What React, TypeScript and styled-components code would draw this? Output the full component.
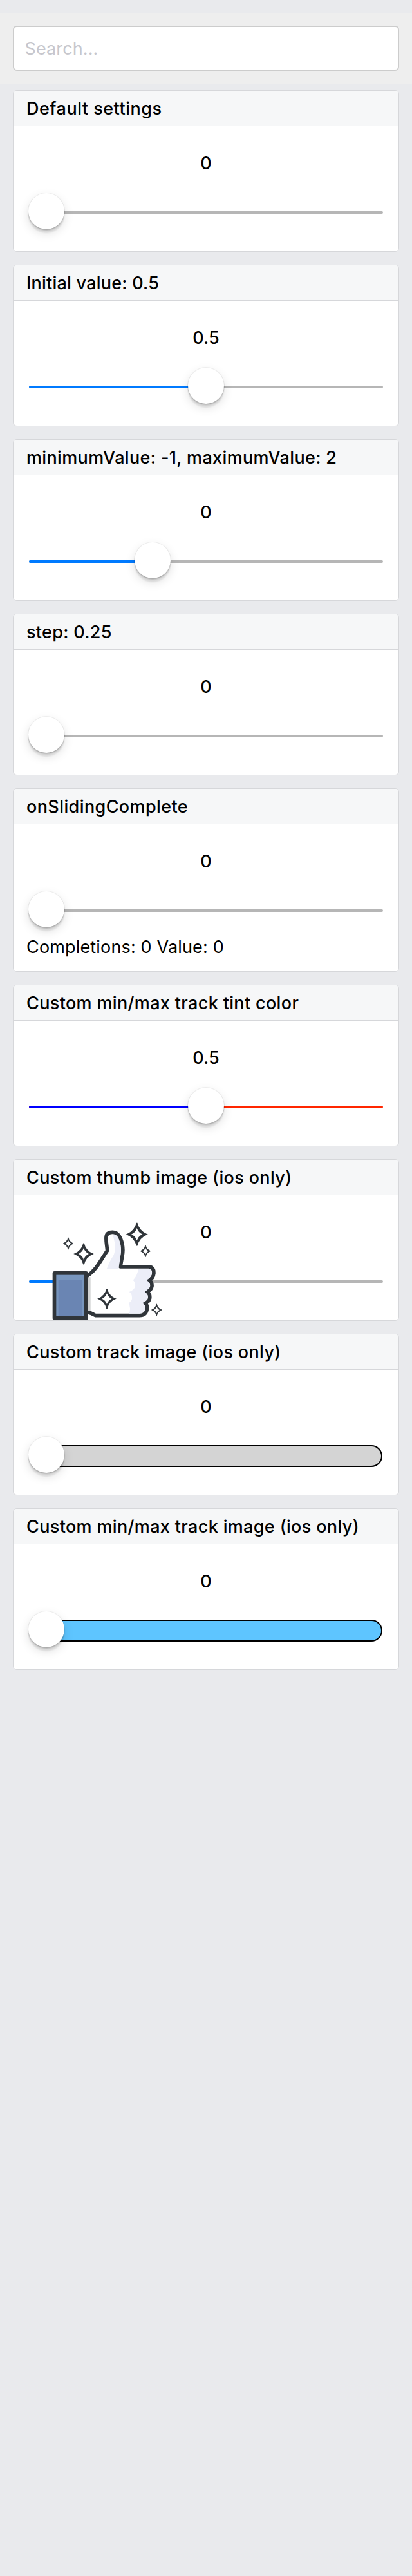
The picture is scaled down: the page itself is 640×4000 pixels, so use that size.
import React from 'react';
import styled, { createGlobalStyle } from 'styled-components';

const Global = createGlobalStyle`
  *, *::before, *::after { box-sizing: border-box; }
  body {
    margin: 0;
    background: #e9eaed;
    color: #000;
    font-family: Inter, "Liberation Sans", sans-serif;
  }
`;

const Page = styled.main`
  min-height: 4000px;
  padding-top: 20px;
  background: #e9eaed;
`;

const SearchBar = styled.div`
  height: 110px;
  padding: 20px;
  background: #eeeeee;
`;

const SearchInput = styled.input`
  display: block;
  width: 100%;
  height: 70px;
  padding: 1px 16.5px 0;
  border: 2px solid #cccccc;
  border-radius: 6px;
  outline: none;
  background: #fff;
  font: 400 27px/32px Inter, "Liberation Sans", sans-serif;
  letter-spacing: 0.11px;

  &::placeholder {
    color: #c7c7cd;
    opacity: 1;
  }
`;

const List = styled.div`
  display: flex;
  flex-direction: column;
  gap: 20px;
  padding: 10px 20px;
`;

const Card = styled.section`
  overflow: hidden;
  border: 1px solid #d6d7da;
  border-radius: 6px;
  background: #fff;
`;

const CardTitle = styled.h2<{ $tracking: number }>`
  height: 55px;
  margin: 0;
  padding: 11px 20px 0;
  border-bottom: 1px solid #d6d7da;
  background: #f6f7f8;
  font-size: 27px;
  font-weight: 500;
  letter-spacing: ${p => p.$tracking}px;
  line-height: 34px;
  white-space: nowrap;
`;

const CardBody = styled.div<{ $tall: boolean }>`
  height: ${p => (p.$tall ? 228 : 194)}px;
  padding: 41px 21px 0;
`;

const Value = styled.div`
  height: 34px;
  font-size: 27px;
  font-weight: 500;
  line-height: 34px;
  text-align: center;
`;

const SliderBox = styled.div`
  position: relative;
  display: flex;
  align-items: center;
  height: 80px;
  margin-top: 19px;
  padding: 0 3px;
`;

const Track = styled.div<{ $color: string }>`
  width: 100%;
  height: 4px;
  overflow: hidden;
  border-radius: 2px;
  background: ${p => p.$color};
`;

const Fill = styled.div<{ $color: string; $ratio: number }>`
  width: ${p => p.$ratio * 100}%;
  height: 100%;
  background: ${p => p.$color};
`;

const ImageTrack = styled.div<{ $color: string }>`
  width: 100%;
  height: 34px;
  margin-right: 1px;
  border: 2px solid #000;
  border-radius: 17px;
  background: ${p => p.$color};
`;

const Thumb = styled.div<{ $ratio: number }>`
  position: absolute;
  top: 10px;
  left: ${p => 2 + p.$ratio * 496}px;
  width: 56px;
  height: 56px;
  border-radius: 50%;
  background: #fff;
  box-shadow:
    0 0 0 1px rgba(0, 0, 0, 0.05),
    0 2px 2px rgba(0, 0, 0, 0.16),
    0 6px 2px rgba(0, 0, 0, 0.08),
    0 6px 16px rgba(0, 0, 0, 0.13);
`;

const LikeThumb = styled.svg`
  position: absolute;
  top: -80px;
  left: -2px;
  width: 240px;
  height: 200px;
`;

const Note = styled.div`
  height: 34px;
  margin-left: -1px;
  font-size: 27px;
  letter-spacing: 0.16px;
  line-height: 34px;
`;

const INK = '#30353a';

const sparkles = [
  { x: 198, y: 183, s: 0.52 },
  { x: 270, y: 231, s: 0.92 },
  { x: 518, y: 140, s: 1 },
  { x: 558, y: 218, s: 0.52 },
  { x: 378, y: 440, s: 0.87 },
  { x: 610, y: 492, s: 0.52 },
];

function Like() {
  return (
    <LikeThumb viewBox="0 0 720 600" aria-hidden>
      <path
        d="M286 334 C330 306 348 262 380 216 C378 190 373 172 375 152 Q377 130 405 130 Q430 130 442 160 Q458 200 450 240 L441 291 L575 291 Q597 293 597 320 Q595 346 572 354 Q590 360 588 382 Q586 400 564 408 Q580 415 578 437 Q575 455 554 460 Q570 470 565 490 Q560 518 530 518 L325 518 Q304 505 286 502 Z"
        fill="#fff"
        stroke={INK}
        strokeWidth="17"
        strokeLinejoin="round"
      />
      <path
        d="M404 139 Q430 142 438 175 Q448 205 441 240 L433 300 L378 300 Q390 265 408 240 Q426 205 404 139 Z"
        fill="#eceef8"
      />
      <path
        d="M525 300 L575 300 Q588 304 588 320 Q586 340 562 354 Q580 362 579 380 Q576 394 554 408 Q571 418 569 436 Q566 450 544 460 Q560 472 556 488 Q550 508 530 509 L482 509 Q492 480 478 460 Q497 452 495 435 Q495 415 482 408 Q506 400 510 382 Q512 365 500 353 Q520 335 525 300 Z"
        fill="#eceef8"
      />
      <path d="M282 340 H302 V495 H282 Z" fill="#d2d3d4" />
      <rect x="125" y="312" width="165" height="228" rx="9" fill={INK} />
      <rect x="142" y="329" width="131" height="193" fill="#7896be" />
      <rect x="152" y="353" width="112" height="169" fill="#6a85b3" />
      {sparkles.map(p => (
        <g key={p.x} transform={`translate(${p.x} ${p.y}) scale(${p.s})`}>
          <path
            d="M0 -53 Q9 -15 45 0 Q9 15 0 53 Q-9 15 -45 0 Q-9 -15 0 -53 Z"
            fill={INK}
            stroke={INK}
            strokeWidth="5"
          />
          <path
            d="M0 -29 Q7 -8 26 0 Q7 8 0 29 Q-7 8 -26 0 Q-7 -8 0 -29 Z"
            fill="#fff"
          />
        </g>
      ))}
    </LikeThumb>
  );
}

type Example = {
  title: string;
  tracking?: number;
  value: string;
  ratio?: number;
  minColor?: string;
  maxColor?: string;
  imageColor?: string;
  like?: boolean;
  note?: string;
};

const examples: Example[] = [
  { title: 'Default settings', tracking: 0.49, value: '0' },
  { title: 'Initial value: 0.5', tracking: 0.23, value: '0.5', ratio: 0.5 },
  { title: 'minimumValue: -1, maximumValue: 2', value: '0', ratio: 1 / 3 },
  { title: 'step: 0.25', tracking: 0.3, value: '0' },
  { title: 'onSlidingComplete', tracking: 0.4, value: '0', note: 'Completions: 0 Value: 0' },
  {
    title: 'Custom min/max track tint color',
    value: '0.5',
    ratio: 0.5,
    minColor: '#0000ff',
    maxColor: '#ff2600',
  },
  { title: 'Custom thumb image (ios only)', value: '0', ratio: 0.12, like: true },
  { title: 'Custom track image (ios only)', value: '0', imageColor: '#d4d4d4' },
  { title: 'Custom min/max track image (ios only)', value: '0', imageColor: '#5ec5ff' },
];

function Slider({
  ratio = 0,
  minColor = '#007aff',
  maxColor = '#b6b6b6',
  imageColor,
  like,
}: Example) {
  return (
    <SliderBox>
      {imageColor ? (
        <ImageTrack $color={imageColor} />
      ) : (
        <Track $color={maxColor}>
          <Fill $color={minColor} $ratio={ratio} />
        </Track>
      )}
      {like ? <Like /> : <Thumb $ratio={ratio} />}
    </SliderBox>
  );
}

export default function App() {
  return (
    <>
      <Global />
      <Page>
        <SearchBar>
          <SearchInput placeholder="Search..." />
        </SearchBar>
        <List>
          {examples.map(example => (
            <Card key={example.title}>
              <CardTitle $tracking={example.tracking ?? 0.35}>{example.title}</CardTitle>
              <CardBody $tall={Boolean(example.note)}>
                <Value>{example.value}</Value>
                <Slider {...example} />
                {example.note && <Note>{example.note}</Note>}
              </CardBody>
            </Card>
          ))}
        </List>
      </Page>
    </>
  );
}
